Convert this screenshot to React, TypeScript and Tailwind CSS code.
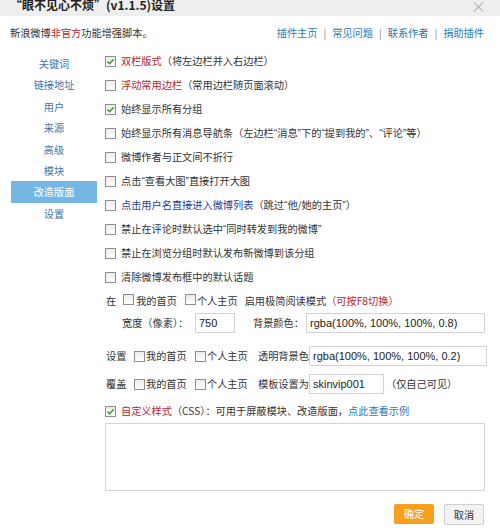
import type { ReactNode } from 'react';

function Check({ checked = false }: { checked?: boolean }) {
  return (
    <span className="inline-flex items-center justify-center w-[11px] h-[11px] shrink-0 border border-[#8e8e8e] bg-linear-to-b from-[#ececec] to-white">
      {checked && (
        <svg viewBox="0 0 10 10" className="w-[9px] h-[9px]">
          <path d="M1.6 5.1 L4 7.4 L8.6 2.4" stroke="#3f9a37" strokeWidth="1.7" fill="none" />
        </svg>
      )}
    </span>
  );
}

// narrow western quotes, the CJK ones take a full em
function Q({ children }: { children: ReactNode }) {
  return (
    <>
      <span className="font-['Liberation_Sans',sans-serif]">“</span>
      {children}
      <span className="font-['Liberation_Sans',sans-serif]">”</span>
    </>
  );
}

function Option({ checked, children }: { checked?: boolean; children: ReactNode }) {
  return (
    <div className="flex items-center gap-[5px] h-[24px]">
      <Check checked={checked} />
      <span className="whitespace-nowrap">{children}</span>
    </div>
  );
}

function Field({ value, className }: { value: string; className: string }) {
  return (
    <div
      className={`h-[20px] flex items-center px-[3px] border border-[#d3d3d3] bg-white text-[11px] text-[#222] font-['Liberation_Sans',sans-serif] ${className}`}
    >
      {value}
    </div>
  );
}

const nav = ['关键词', '链接地址', '用户', '来源', '高级', '模块', '改造版面', '设置'];
const links = ['插件主页', '常见问题', '联系作者', '捐助插件'];

export default function App() {
  return (
    <div className="w-[500px] h-[530px] overflow-hidden bg-white text-[10.2px] text-[#333] font-['Noto_Sans_CJK_SC',sans-serif]">
      {/* Title bar, top edge cut off */}
      <div className="relative h-[16px] bg-[#eeeeee] overflow-hidden">
        <div className="pl-[10px] -mt-[1px] text-[12px] leading-none font-bold text-[#222]">
          “眼不见心不烦”(v1.1.5)设置
        </div>
        <span className="absolute right-[14px] -top-[5px] text-[15px] text-[#b5b5b5]">×</span>
      </div>

      {/* Intro and links */}
      <div className="flex items-center justify-between h-[18px] mt-[8px] pl-[10px] pr-[16px]">
        <span>
          新浪微博<span className="text-[#b3262c]">非官方</span>功能增强脚本。
        </span>
        <div className="flex items-center text-[#2b79b3]">
          {links.map((l, i) => (
            <span key={l} className="flex items-center">
              {i > 0 && <span className="px-[6px] text-[#888]">|</span>}
              {l}
            </span>
          ))}
        </div>
      </div>

      <div className="flex mt-[7px]">
        {/* Side tabs */}
        <div className="w-[105px] shrink-0 pl-[11px] pt-[4px] flex flex-col">
          {nav.map((n) => (
            <div
              key={n}
              className={`w-[86px] h-[21.4px] flex items-center justify-center ${
                n === '改造版面' ? 'bg-[#74b7e2] text-white' : 'text-[#3f76a6]'
              }`}
            >
              {n}
            </div>
          ))}
        </div>

        {/* Layout options */}
        <div className="flex-1 pr-[15px] flex flex-col">
          <Option checked>
            <span className="text-[#b3262c]">双栏版式</span>（将左边栏并入右边栏）
          </Option>
          <Option>
            <span className="text-[#b3262c]">浮动常用边栏</span>（常用边栏随页面滚动）
          </Option>
          <Option checked>始终显示所有分组</Option>
          <Option>
            始终显示所有消息导航条（左边栏<Q>消息</Q>下的<Q>提到我的</Q>、<Q>评论</Q>等）
          </Option>
          <Option>微博作者与正文间不折行</Option>
          <Option>
            点击<Q>查看大图</Q>直接打开大图
          </Option>
          <Option>
            <span className="text-[#1f3d8f]">点击用户名直接进入微博列表</span>（跳过<Q>他/她的主页</Q>）
          </Option>
          <Option>
            禁止在评论时默认选中<Q>同时转发到我的微博</Q>
          </Option>
          <Option>禁止在浏览分组时默认发布新微博到该分组</Option>
          <Option>清除微博发布框中的默认话题</Option>

          <div className="flex items-center h-[24px] pl-[1px] whitespace-nowrap">
            <span>在</span>
            <span className="ml-[7px]"><Check /></span>
            <span className="ml-[2px]">我的首页</span>
            <span className="ml-[8px]"><Check /></span>
            <span className="ml-[1px]">个人主页</span>
            <span className="ml-[7px]">启用极简阅读模式</span>
            <span className="text-[#b3262c]">（可按F8切换）</span>
          </div>

          <div className="flex items-center h-[20px] whitespace-nowrap">
            <span className="ml-[17px] w-[73px]">宽度（像素）：</span>
            <Field value="750" className="w-[40px]" />
            <span className="ml-[18px] w-[53px]">背景颜色：</span>
            <Field value="rgba(100%, 100%, 100%, 0.8)" className="flex-1" />
          </div>

          <div className="flex items-center h-[20px] mt-[13px] pl-[1px] whitespace-nowrap">
            <span className="w-[28px]">设置</span>
            <Check />
            <span className="ml-[1px] w-[49px]">我的首页</span>
            <Check />
            <span className="ml-[1px] w-[51px]">个人主页</span>
            <span className="w-[51px] shrink-0">透明背景色</span>
            <Field value="rgba(100%, 100%, 100%, 0.2)" className="flex-1 -mr-[2px]" />
          </div>

          <div className="flex items-center h-[20px] mt-[8px] pl-[1px] whitespace-nowrap">
            <span className="w-[28px]">覆盖</span>
            <Check />
            <span className="ml-[1px] w-[49px]">我的首页</span>
            <Check />
            <span className="ml-[1px] w-[51px]">个人主页</span>
            <span className="w-[51px] shrink-0">模板设置为</span>
            <Field value="skinvip001" className="w-[75px]" />
            <span className="ml-[2px]">（仅自己可见）</span>
          </div>

          <div className="flex items-center gap-[5px] h-[18px] mt-[8px] whitespace-nowrap">
            <Check checked />
            <span>
              <span className="text-[#b3262c]">自定义样式</span>（CSS）：可用于屏蔽模块、改造版面，
              <span className="text-[#2b79b3]">点此查看示例</span>
            </span>
          </div>

          <div className="h-[68px] mt-[3px] border border-[#d3d3d3] bg-white" />

          <div className="flex justify-end gap-[10px] mt-[13px] pr-[1px]">
            <button className="w-[40px] h-[20px] bg-[#f6a01c] text-white text-[10.2px] rounded-[2px]">确定</button>
            <button className="w-[40px] h-[21px] bg-[#f3f3f3] border border-[#d0d0d0] text-[#333] text-[10.2px] rounded-[2px]">
              取消
            </button>
          </div>
        </div>
      </div>
    </div>
  );
}
